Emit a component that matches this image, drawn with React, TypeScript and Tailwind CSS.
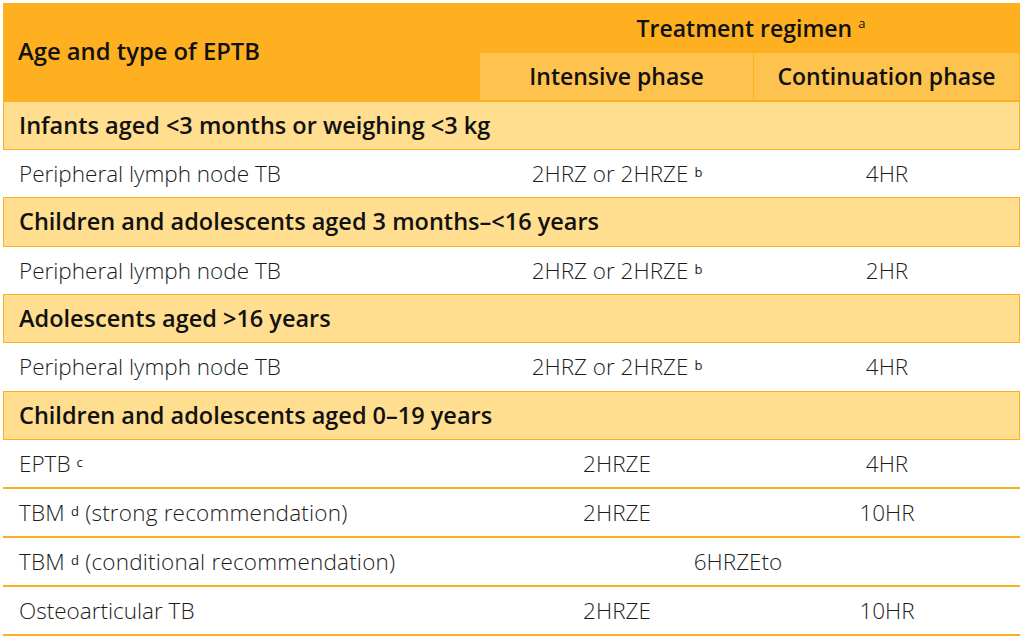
import React from "react";

const Sup = ({ c }: { c: string }) => (
  <sup className="ml-[6px] text-[13px] font-normal relative top-[-5px]">{c}</sup>
);

const Section = ({ text, h }: { text: string; h: string }) => (
  <div className={`flex items-center ${h} border border-[#fbb023] bg-[#ffde8f] pl-[15px] text-[23.5px] font-semibold text-[#111]`}>
    {text}
  </div>
);

const Data = ({
  label,
  a,
  b,
  span,
  h,
  last,
}: {
  label: React.ReactNode;
  a?: React.ReactNode;
  b?: React.ReactNode;
  span?: React.ReactNode;
  h: string;
  last?: boolean;
}) => (
  <div className={`grid grid-cols-[477px_274px_266px] ${h} ${last ? "" : "border-b-2 border-[#fbb023]"} text-[22.5px] font-light text-[#1c1c1c]`}>
    <div className="flex items-center pl-[16px]">{label}</div>
    {span ? (
      <div className="col-span-2 flex items-center justify-center pr-[24px]">{span}</div>
    ) : (
      <>
        <div className="flex items-center justify-center">{a}</div>
        <div className="flex items-center justify-center">{b}</div>
      </>
    )}
  </div>
);

export default function App() {
  return (
    <div className="w-[1024px] h-[639px] bg-white pt-[3px] pl-[3px]" style={{ fontFamily: '"Open Sans", "Noto Sans", sans-serif' }}>
      <div className="w-[1017px] flex flex-col">
        {/* header */}
        <div className="grid grid-cols-[477px_540px] h-[98px] bg-[#feb020] text-[#111] font-semibold text-[23px]">
          <div className="flex items-center pl-[15px] text-[23.8px]">Age and type of EPTB</div>
          <div className="flex flex-col">
            <div className="h-[50px] flex items-center justify-center pl-[2px]">
              Treatment regimen<Sup c="a" />
            </div>
            <div className="h-[47px] grid grid-cols-[273px_1px_266px]">
              <div className="bg-[#fec34e] flex items-center justify-center">Intensive phase</div>
              <div className="bg-[#feb020]" />
              <div className="bg-[#fec34e] flex items-center justify-center border-r border-[#feb020]">Continuation phase</div>
            </div>
          </div>
        </div>
        <Section h="h-[49px]" text="Infants aged <3 months or weighing <3 kg" />
        <Data h="h-[47px]" last label="Peripheral lymph node TB" a={<span>2HRZ or 2HRZE<Sup c="b" /></span>} b="4HR" />
        <Section h="h-[50px]" text="Children and adolescents aged 3 months–<16 years" />
        <Data h="h-[47px]" last label="Peripheral lymph node TB" a={<span>2HRZ or 2HRZE<Sup c="b" /></span>} b="2HR" />
        <Section h="h-[49px]" text="Adolescents aged >16 years" />
        <Data h="h-[48px]" last label="Peripheral lymph node TB" a={<span>2HRZ or 2HRZE<Sup c="b" /></span>} b="4HR" />
        <Section h="h-[49px]" text="Children and adolescents aged 0–19 years" />
        <Data h="h-[49px]" label={<span>EPTB<Sup c="c" /></span>} a="2HRZE" b="4HR" />
        <Data h="h-[49px]" label={<span className="tracking-[0.2px]">TBM<Sup c="d" /> (strong recommendation)</span>} a="2HRZE" b="10HR" />
        <Data h="h-[49px]" label={<span className="tracking-[0.2px]">TBM<Sup c="d" /> (conditional recommendation)</span>} span="6HRZEto" />
        <Data h="h-[49px]" label="Osteoarticular TB" a="2HRZE" b="10HR" />
      </div>
    </div>
  );
}
